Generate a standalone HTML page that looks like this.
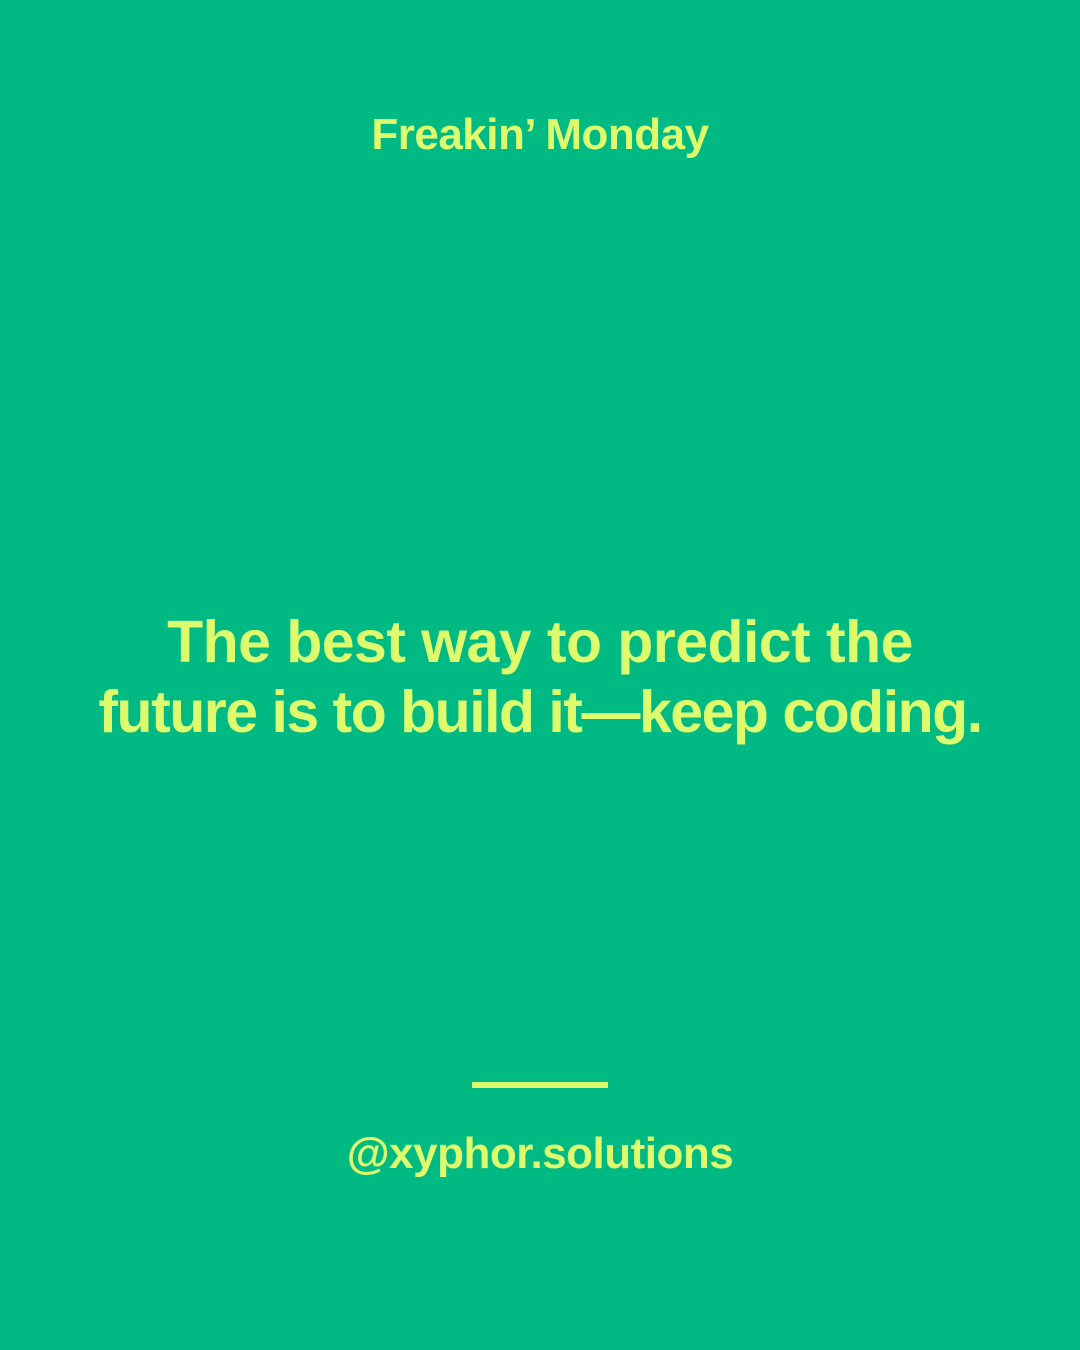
<!DOCTYPE html>
<html><head><style>
html,body{margin:0;padding:0}
body{width:1080px;height:1350px;background:#01B982;position:relative;overflow:hidden;font-family:"Liberation Sans",sans-serif;font-weight:bold;color:#DDFB6C}
.t{position:absolute;left:0;width:1080px;text-align:center;white-space:nowrap}
#a{top:110px;font-size:44px;letter-spacing:-0.5px;line-height:50px}
#q{top:607px;font-size:59px;line-height:70px}
#q span{display:block}
#h{top:1129px;font-size:44px;letter-spacing:-0.5px;line-height:50px}
#bar{position:absolute;left:472px;top:1082px;width:136px;height:6px;background:#DDFB6C}
</style></head><body>
<div class="t" id="a">Freakin’ Monday</div>
<div class="t" id="q"><span style="letter-spacing:-0.55px">The best way to predict the</span><span style="letter-spacing:-1.5px">future is to build it—keep coding.</span></div>
<div id="bar"></div>
<div class="t" id="h">@xyphor.solutions</div>
</body></html>
